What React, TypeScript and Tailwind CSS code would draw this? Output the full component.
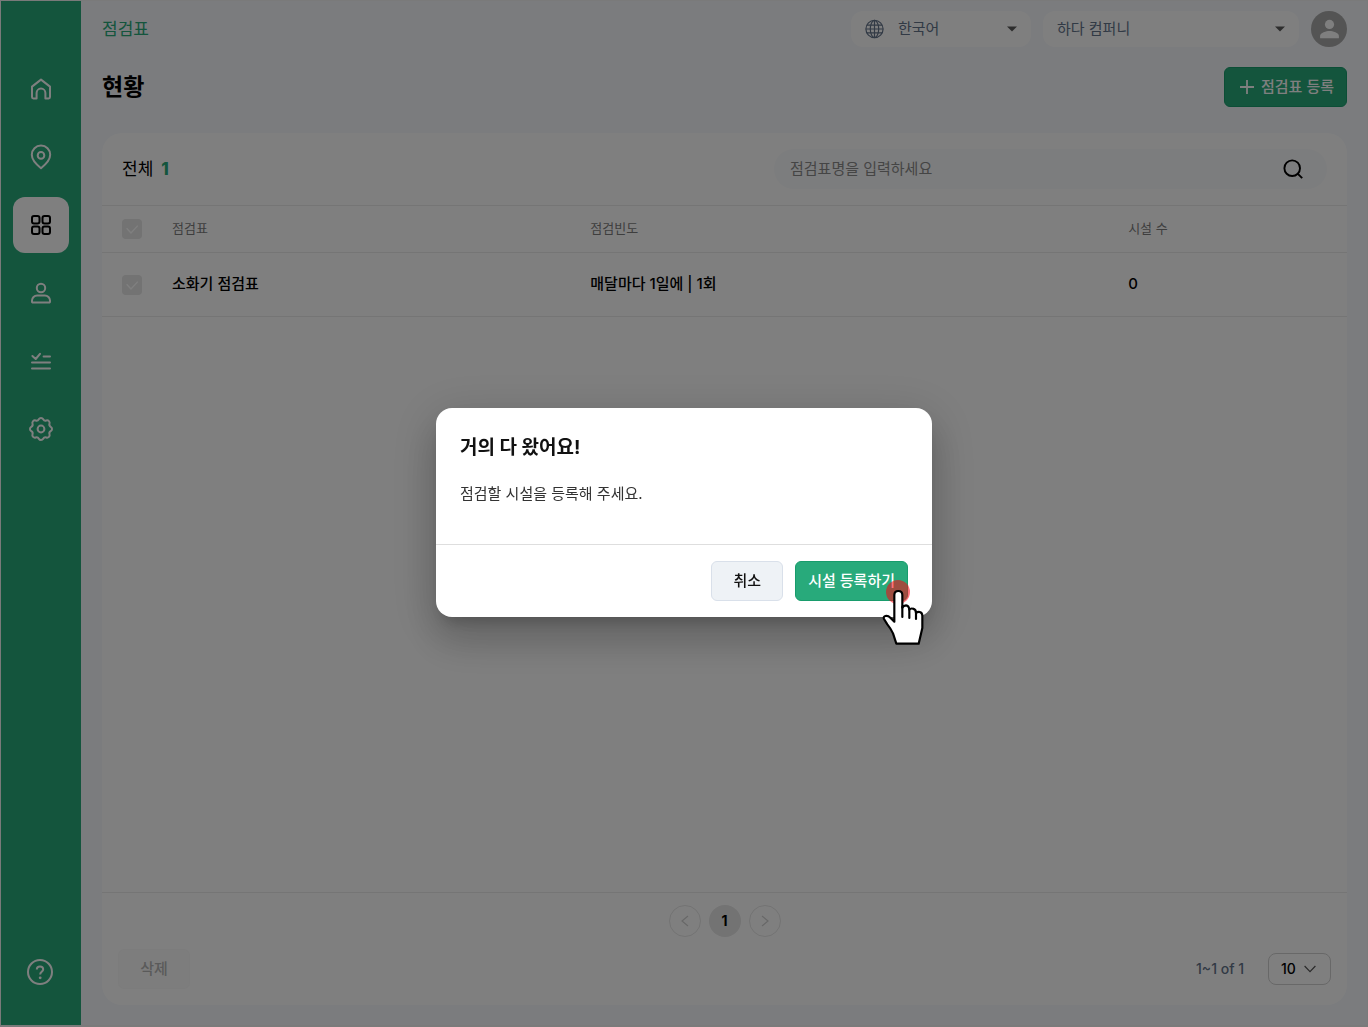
import React from "react";

interface Checklist {
  id: number;
  name: string;
  frequency: string;
  facilities: number;
}

const checklists: Checklist[] = [
  { id: 1, name: "소화기 점검표", frequency: "매달마다 1일에 | 1회", facilities: 0 },
];

const HomeIcon = () => (
  <path d="M5 11.6 14 4.6l9 7V22a1.4 1.4 0 0 1-1.4 1.4h-3.2V18a4.4 4.4 0 0 0-8.8 0v5.4H6.4A1.4 1.4 0 0 1 5 22z" />
);

const PinIcon = () => (
  <>
    <path d="M14 25.2c-3.4-2.7-9.2-7.6-9.2-13.4a9.2 9.2 0 0 1 18.4 0c0 5.8-5.8 10.7-9.2 13.4z" />
    <circle cx="14" cy="12.4" r="3.3" />
  </>
);

const GridIcon = () => (
  <>
    <rect x="5" y="5" width="7.5" height="7.5" rx="2" />
    <rect x="15.5" y="5" width="7.5" height="7.5" rx="2" />
    <rect x="5" y="15.5" width="7.5" height="7.5" rx="2" />
    <rect x="15.5" y="15.5" width="7.5" height="7.5" rx="2" />
  </>
);

const UserIcon = () => (
  <>
    <circle cx="14" cy="9" r="4.2" />
    <path d="M5 22.8v-1.2a5.2 5.2 0 0 1 5.2-5.2h7.6a5.2 5.2 0 0 1 5.2 5.2v1.2a.8.8 0 0 1-.8.8H5.8a.8.8 0 0 1-.8-.8z" />
  </>
);

const ListIcon = () => (
  <path d="M5.4 9l3.3 3L13 6.800M16.600 9.600H23M5 15.600h18M5 21.600h18" />
);

const GearIcon = () => (
  <>
    <path d="M23.7 11.8A2.5 2.5 0 0 1 23.7 16.2A2.6 2.6 0 0 0 22.5 19.3A2.5 2.5 0 0 1 19.3 22.5A2.6 2.6 0 0 0 16.2 23.7A2.5 2.5 0 0 1 11.8 23.7A2.6 2.6 0 0 0 8.7 22.5A2.5 2.5 0 0 1 5.5 19.3A2.6 2.6 0 0 0 4.3 16.2A2.5 2.5 0 0 1 4.3 11.8A2.6 2.6 0 0 0 5.5 8.7A2.5 2.5 0 0 1 8.7 5.5A2.6 2.6 0 0 0 11.8 4.3A2.5 2.5 0 0 1 16.2 4.3A2.6 2.6 0 0 0 19.3 5.5A2.5 2.5 0 0 1 22.5 8.7A2.6 2.6 0 0 0 23.7 11.8Z" />
    <circle cx="14" cy="14" r="3.4" />
  </>
);

const menu = [
  { label: "홈", icon: <HomeIcon /> },
  { label: "위치", icon: <PinIcon /> },
  { label: "점검표", icon: <GridIcon />, active: true },
  { label: "사용자", icon: <UserIcon /> },
  { label: "점검 내역", icon: <ListIcon /> },
  { label: "설정", icon: <GearIcon /> },
];

const Sidebar = () => (
  <aside className="flex w-20 shrink-0 flex-col items-center justify-between bg-[#28aa7b] pt-15 pb-[37px]">
    <nav className="flex flex-col gap-3">
      {menu.map((m) => (
        <a
          key={m.label}
          href="#"
          aria-label={m.label}
          className={
            m.active
              ? "flex h-14 w-14 items-center justify-center rounded-xl bg-white text-black"
              : "flex h-14 w-14 items-center justify-center rounded-xl text-white"
          }
        >
          <svg
            className="h-7 w-7"
            viewBox="0 0 28 28"
            fill="none"
            stroke="currentColor"
            strokeWidth="2"
            strokeLinecap="round"
            strokeLinejoin="round"
          >
            {m.icon}
          </svg>
        </a>
      ))}
    </nav>
    <a href="#" aria-label="도움말" className="text-white">
      <svg className="h-8 w-8" viewBox="0 0 32 32" fill="none" stroke="currentColor" strokeWidth="2">
        <circle cx="15" cy="16" r="12" />
        <path d="M11.8 13.6c0-1.9 1.4-3.1 3.2-3.1s3.2 1.1 3.2 2.8c0 2.4-3 2.5-3 4.9v.4" />
        <circle cx="15.2" cy="21.8" r="1.4" fill="currentColor" stroke="none" />
      </svg>
    </a>
  </aside>
);

const Caret = () => (
  <svg className="pointer-events-none h-[6px] w-[10px] shrink-0" viewBox="0 0 10 6">
    <path d="M0 .5h10L5 5.5z" fill="#5a5a5a" />
  </svg>
);

const TopBar = () => (
  <header className="flex items-center justify-between pt-[10px]">
    <p className="text-[17px] leading-6 text-[#28aa7b]">점검표</p>
    <div className="flex items-center gap-3">
      <label className="flex h-9 w-[180px] items-center rounded-xl bg-white px-[14px] text-[#64748b]">
        <svg
          className="h-5 w-5 shrink-0"
          viewBox="0 0 20 20"
          fill="none"
          stroke="currentColor"
          strokeWidth="1.2"
        >
          <circle cx="9.500" cy="10" r="8.600" />
          <ellipse cx="9.500" cy="10" rx="4.200" ry="8.600" />
          <path d="M9.500 1.400v17.200M.9 10h17.200M2 6.200h15M2 13.800h15" />
        </svg>
        <select
          aria-label="언어"
          className="ml-[13px] min-w-0 flex-1 appearance-none bg-transparent text-[15px] leading-6 outline-none"
        >
          <option>한국어</option>
        </select>
        <Caret />
      </label>
      <label className="flex h-9 w-64 items-center rounded-xl bg-white px-[14px] text-[#64748b]">
        <select
          aria-label="회사"
          className="min-w-0 flex-1 appearance-none bg-transparent text-[15px] leading-6 outline-none"
        >
          <option>하다 컴퍼니</option>
        </select>
        <Caret />
      </label>
      <button
        aria-label="내 계정"
        className="flex h-9 w-9 items-center justify-center rounded-full bg-[#a8a8a8] text-white"
      >
        <svg className="h-5 w-5" viewBox="0 0 20 20" fill="currentColor">
          <circle cx="10.5" cy="5.400" r="4.600" />
          <path d="M1.100 19.200v-2.300c0-3.200 6.300-4.800 9.400-4.800s9.400 1.600 9.400 4.800v2.300z" />
        </svg>
      </button>
    </div>
  </header>
);

const CheckBox = ({ label }: { label: string }) => (
  <label className="relative block h-5 w-5">
    <input
      type="checkbox"
      aria-label={label}
      className="block h-5 w-5 appearance-none rounded bg-[#e6e6e6]"
    />
    <svg
      className="pointer-events-none absolute inset-0 h-5 w-5"
      viewBox="0 0 20 20"
      fill="none"
      stroke="#fff"
      strokeWidth="1.4"
    >
      <path d="M4.600 9.200 9 14l6.800-7.400" />
    </svg>
  </label>
);

const ChecklistTable = () => (
  <table className="w-full table-fixed text-left">
    <colgroup>
      <col className="w-[70px]" />
      <col className="w-[33.6%]" />
      <col className="w-[43.2%]" />
      <col />
    </colgroup>
    <thead>
      <tr className="h-[47px] border-y border-[#ebebeb] text-[13px] leading-5 text-[#7c7c7c]">
        <th className="pl-5">
          <CheckBox label="전체 선택" />
        </th>
        <th className="pb-[2px] font-normal">점검표</th>
        <th className="pb-[2px] font-normal">점검빈도</th>
        <th className="pb-[2px] font-normal">시설 수</th>
      </tr>
    </thead>
    <tbody>
      {checklists.map((c) => (
        <tr
          key={c.id}
          className="h-16 border-b border-[#ebebeb] text-[15px] leading-6 font-medium text-black"
        >
          <td className="pl-5">
            <CheckBox label={c.name} />
          </td>
          <td className="pb-[2px]">{c.name}</td>
          <td className="pb-[2px]">{c.frequency}</td>
          <td className="pb-[2px]">{c.facilities}</td>
        </tr>
      ))}
    </tbody>
  </table>
);

const CardFooter = () => (
  <div className="border-t border-[#ebebeb] pt-3 pb-4">
    <div className="flex items-center justify-center gap-2">
      <button
        aria-label="이전"
        className="flex h-8 w-8 items-center justify-center rounded-full border border-[#e6e6e6] text-[#d0d0d0]"
      >
        <svg className="h-4 w-4" viewBox="0 0 16 16" fill="none" stroke="currentColor" strokeWidth="1.2">
          <path d="M11 3 5 8l6 5" />
        </svg>
      </button>
      <button className="h-8 w-8 rounded-full bg-[#e6e6e6] text-sm leading-5 font-bold text-black">
        1
      </button>
      <button
        aria-label="다음"
        className="flex h-8 w-8 items-center justify-center rounded-full border border-[#e6e6e6] text-[#d0d0d0]"
      >
        <svg className="h-4 w-4" viewBox="0 0 16 16" fill="none" stroke="currentColor" strokeWidth="1.2">
          <path d="m5 3 6 5-6 5" />
        </svg>
      </button>
    </div>
    <div className="mt-3 flex items-center justify-between px-4">
      <button className="h-10 w-[72px] rounded-md border border-[#f9f9f9] bg-[#fbfbfb] text-[15px] leading-6 font-medium text-[#b4b4b4]">
        삭제
      </button>
      <div className="flex items-center gap-6">
        <span className="text-sm leading-5 font-medium text-[#64748b]">1~1 of 1</span>
        <label className="flex h-8 w-[63px] items-center rounded-lg border border-[#d0d0d0] pr-[14px] pl-3">
          <select
            aria-label="페이지당 개수"
            className="min-w-0 flex-1 appearance-none bg-transparent text-sm leading-5 font-medium text-black outline-none"
          >
            <option>10</option>
          </select>
          <svg
            className="pointer-events-none h-3 w-3 shrink-0"
            viewBox="0 0 12 12"
            fill="none"
            stroke="#555"
            strokeWidth="1.2"
          >
            <path d="m.6 3 5.400 5.600L11.400 3" />
          </svg>
        </label>
      </div>
    </div>
  </div>
);

const Cursor = () => (
  <>
    <span className="pointer-events-none absolute top-[18px] left-[90px] h-6 w-6 rounded-full bg-[#ff0010]/55" />
    <svg
      className="pointer-events-none absolute top-[27px] left-[86px] h-[57px] w-[43px]"
      viewBox="36 119 129 171"
      fill="#fff"
      stroke="#000"
      strokeWidth="6.5"
      strokeLinejoin="round"
      strokeLinecap="round"
    >
      <path d="M79 283 69 252Q62 237 52 225L42 209Q39 202 46 200Q54 198 61 205L73 217V137Q73 125 85 125Q97 125 97 137V175Q101 168 108 168Q117 169 118 181Q122 176 129 178Q138 180 138 191Q143 187 149 188Q157 190 157 199V236L146 283Z" />
      <path d="M97 172V203M118 180V206M138 190V209" fill="none" />
    </svg>
  </>
);

const Modal = () => (
  <div className="fixed inset-0 flex items-center justify-center bg-black/50 pb-[2px]">
    <div
      role="dialog"
      aria-modal="true"
      aria-labelledby="modal-title"
      className="w-[496px] rounded-2xl bg-white shadow-[0_11px_15px_-7px_rgba(0,0,0,0.2),0_24px_38px_3px_rgba(0,0,0,0.14),0_9px_46px_8px_rgba(0,0,0,0.12)]"
    >
      <div className="px-6 pt-[26px] pb-[38px]">
        <h2 id="modal-title" className="text-[19px] leading-7 font-bold text-[#111]">
          거의 다 왔어요!
        </h2>
        <p className="mt-5 text-[15px] leading-6 text-[#333]">점검할 시설을 등록해 주세요.</p>
      </div>
      <div className="flex justify-end gap-3 border-t border-[#dedede] px-6 py-4 text-[15px] leading-6 font-medium">
        <button className="h-10 w-[72px] rounded-md border border-[#d9e0ea] bg-[#eef2f6] text-[#111]">
          취소
        </button>
        <button className="relative h-10 rounded-md border border-[#189c6c] bg-[#28aa7b] px-3 text-white">
          시설 등록하기
          <Cursor />
        </button>
      </div>
    </div>
  </div>
);

const App = () => {
  return (
    <div className="flex min-h-screen border border-b-2 border-[#f4f4f4] bg-[#f6f8fc] font-['Inter','Noto_Sans_CJK_KR',sans-serif]">
      <Sidebar />
      <main className="flex min-w-0 flex-1 flex-col pr-5 pb-5 pl-[21px]">
        <TopBar />
        <div className="mt-5 flex items-center justify-between">
          <h1 className="text-[23px] leading-8 font-bold text-black">현황</h1>
          <button className="flex h-10 items-center gap-[6px] rounded-md border border-[#189c6c] bg-[#28aa7b] pr-3 pl-[14px] text-[15px] leading-6 font-medium text-white">
            <svg className="h-4 w-4" viewBox="0 0 16 16" stroke="currentColor" strokeWidth="1.8">
              <path d="M8 1v14M1 8h14" />
            </svg>
            점검표 등록
          </button>
        </div>
        <section className="mt-[26px] flex flex-1 flex-col rounded-[20px] bg-white">
          <div className="flex items-center justify-between px-5 py-4">
            <p className="flex items-center gap-2 text-[17px] leading-6 text-black">
              전체 <b className="font-extrabold text-[#28aa7b]">1</b>
            </p>
            <form className="flex h-10 w-[553px] items-center rounded-full bg-[#f9fafc] pr-6 pl-4">
              <input
                type="text"
                aria-label="점검표명"
                placeholder="점검표명을 입력하세요"
                className="min-w-0 flex-1 bg-transparent text-[15px] leading-6 outline-none placeholder:text-[#8a8a8a]"
              />
              <button type="button" aria-label="검색">
                <svg
                  className="h-5 w-5"
                  viewBox="0 0 20 20"
                  fill="none"
                  stroke="#000"
                  strokeWidth="1.9"
                >
                  <circle cx="9.2" cy="9.2" r="7.800" />
                  <path d="m14.600 14.600 4.600 4.600" />
                </svg>
              </button>
            </form>
          </div>
          <ChecklistTable />
          <div className="flex-1" />
          <CardFooter />
        </section>
      </main>
      <Modal />
    </div>
  );
};

export default App;
